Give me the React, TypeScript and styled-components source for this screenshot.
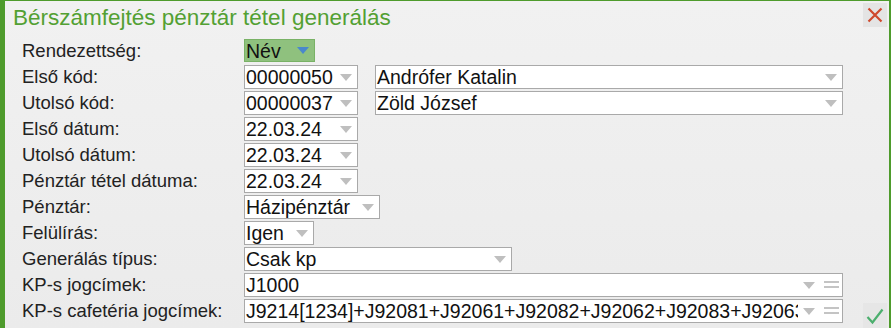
import { Fragment } from "react";
import styled, { createGlobalStyle } from "styled-components";

const GlobalStyle = createGlobalStyle`
  html, body {
    margin: 0;
    padding: 0;
    overflow: hidden;
    background: #ffffff;
  }
  * {
    box-sizing: border-box;
  }
`;

const Dialog = styled.div`
  width: 891px;
  height: 328px;
  display: flex;
  flex-direction: column;
  background: linear-gradient(#f1f1f1, #ebebeb);
  border-top: 1px solid #4e9b2c;
  border-left: 5px solid #4e9b2c;
  border-right: 2px solid #4e9b2c;
  font-family: "Liberation Sans", Arial, sans-serif;
  overflow: hidden;
`;

const TitleBar = styled.div`
  height: 38px;
  display: flex;
  align-items: flex-start;
  justify-content: space-between;
  padding: 2px 2px 0 8px;
`;

const Title = styled.h1`
  margin: 2px 0 0;
  font-size: 22.5px;
  line-height: 26px;
  font-weight: normal;
  color: #53a033;
`;

const IconButton = styled.div`
  width: 24px;
  height: 24px;
  display: flex;
  align-items: center;
  justify-content: center;
  background: #e4e4e4;
`;

const Form = styled.div`
  display: grid;
  grid-template-columns: 222px 599px 24px;
  grid-auto-rows: 24px;
  row-gap: 2px;
  padding-left: 17px;
`;

const Label = styled.div`
  font-size: 18.5px;
  line-height: 24px;
  color: #222;
  white-space: nowrap;
`;

const Fields = styled.div`
  display: flex;
  gap: 17px;
`;

const ActionCell = styled.div`
  margin-left: 20px;
  width: 24px;
`;

const CheckButton = styled(IconButton)`
  height: 26px;
  margin-top: 4px;
  background: #e6e6e6;
`;

const Select = styled.div<{ $width: number; $active?: boolean }>`
  width: ${(p) => p.$width}px;
  height: ${(p) => (p.$active ? 23 : 24)}px;
  display: flex;
  align-items: stretch;
  border: 1px solid ${(p) => (p.$active ? "#79b266" : "#a9a9a9")};
  background: ${(p) => (p.$active ? "#8fc17e" : "#ffffff")};
`;

const Value = styled.span`
  flex: 1;
  min-width: 0;
  padding: 1px 0 0 1px;
  font-size: 19.5px;
  line-height: 21px;
  color: #111;
  white-space: nowrap;
  overflow-x: clip;
  overflow-y: visible;
`;

const Slot = styled.span`
  width: 22px;
  flex: none;
  display: flex;
  align-items: center;
  justify-content: center;
`;

const Arrow = ({ color = "#bfbfbf" }: { color?: string }) => (
  <Slot>
    <svg width="12" height="7" viewBox="0 0 12 7">
      <polygon points="0,0 12,0 6,7" fill={color} />
    </svg>
  </Slot>
);

const Lines = () => (
  <Slot>
    <svg width="15" height="8" viewBox="0 0 15 8">
      <rect x="0" y="0" width="15" height="2" fill="#c4c4c4" />
      <rect x="0" y="5" width="15" height="2" fill="#c4c4c4" />
    </svg>
  </Slot>
);

interface FieldProps {
  value: string;
  width: number;
  active?: boolean;
  multi?: boolean;
}

const Field = ({ value, width, active, multi }: FieldProps) => (
  <Select $width={width} $active={active}>
    <Value>{value}</Value>
    <Arrow color={active ? "#4a88cc" : "#bfbfbf"} />
    {multi && <Lines />}
  </Select>
);

const rows: { label: string; fields: FieldProps[] }[] = [
  { label: "Rendezettség:", fields: [{ value: "Név", width: 71, active: true }] },
  {
    label: "Első kód:",
    fields: [
      { value: "00000050", width: 114 },
      { value: "Andrófer Katalin", width: 468 },
    ],
  },
  {
    label: "Utolsó kód:",
    fields: [
      { value: "00000037", width: 114 },
      { value: "Zöld József", width: 468 },
    ],
  },
  { label: "Első dátum:", fields: [{ value: "22.03.24", width: 114 }] },
  { label: "Utolsó dátum:", fields: [{ value: "22.03.24", width: 114 }] },
  { label: "Pénztár tétel dátuma:", fields: [{ value: "22.03.24", width: 114 }] },
  { label: "Pénztár:", fields: [{ value: "Házipénztár", width: 136 }] },
  { label: "Felülírás:", fields: [{ value: "Igen", width: 70 }] },
  { label: "Generálás típus:", fields: [{ value: "Csak kp", width: 268 }] },
  { label: "KP-s jogcímek:", fields: [{ value: "J1000", width: 599, multi: true }] },
  {
    label: "KP-s cafetéria jogcímek:",
    fields: [
      {
        value: "J9214[1234]+J92081+J92061+J92082+J92062+J92083+J92063+J92084",
        width: 599,
        multi: true,
      },
    ],
  },
];

export default function App() {
  return (
    <>
      <GlobalStyle />
      <Dialog>
        <TitleBar>
          <Title>Bérszámfejtés pénztár tétel generálás</Title>
          <IconButton>
            <svg width="16" height="16" viewBox="0 0 16 16">
              <path d="M1.5 1.5 L14.5 14.5 M14.5 1.5 L1.5 14.5" stroke="#cf4a2e" strokeWidth="2.2" />
            </svg>
          </IconButton>
        </TitleBar>
        <Form>
          {rows.map((row, i) => (
            <Fragment key={row.label}>
              <Label>{row.label}</Label>
              <Fields>
                {row.fields.map((f, j) => (
                  <Field key={j} {...f} />
                ))}
              </Fields>
              <ActionCell>
                {i === rows.length - 1 && (
                  <CheckButton>
                    <svg width="20" height="18" viewBox="0 0 20 18">
                      <path d="M2.5 10 L7.5 15.5 L17.5 2.5" fill="none" stroke="#4caf6e" strokeWidth="2.2" />
                    </svg>
                  </CheckButton>
                )}
              </ActionCell>
            </Fragment>
          ))}
        </Form>
      </Dialog>
    </>
  );
}
